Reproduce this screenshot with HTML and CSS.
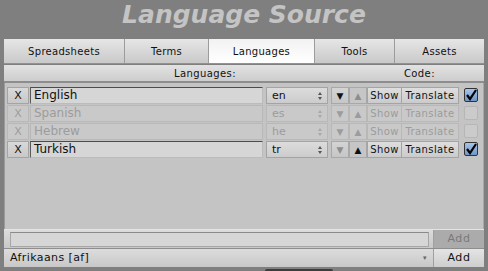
FILE: index.html
```html
<!DOCTYPE html>
<html lang="en">
<head>
  <meta charset="UTF-8">
  <title>Language Source</title>
  <link rel="stylesheet" href="styles.css">
</head>
<body>
  <h1 class="title">Language Source</h1>

  <div class="tabs">
    <div class="tab tab-sheets">Spreadsheets</div>
    <div class="tab tab-terms">Terms</div>
    <div class="tab tab-langs active">Languages</div>
    <div class="tab tab-tools">Tools</div>
    <div class="tab tab-assets">Assets</div>
  </div>

  <div class="colhead">
    <span class="col-lang">Languages:</span>
    <span class="col-code">Code:</span>
  </div>

  <div class="list">
    <div class="row">
      <div class="btn-x">X</div>
      <div class="name">English</div>
      <div class="code">en<span class="updown"></span></div>
      <div class="arrow">&#9660;</div>
      <div class="arrow off">&#9650;</div>
      <div class="btn show">Show</div>
      <div class="btn translate">Translate</div>
      <div class="check on"><svg width="14" height="14" viewBox="0 0 14 14"><path d="M3 7 L6 11 L12 2" fill="none" stroke="#000" stroke-width="2.2"/></svg></div>
    </div>
    <div class="row disabled">
      <div class="btn-x">X</div>
      <div class="name">Spanish</div>
      <div class="code">es<span class="updown"></span></div>
      <div class="arrow off">&#9660;</div>
      <div class="arrow off">&#9650;</div>
      <div class="btn show">Show</div>
      <div class="btn translate">Translate</div>
      <div class="check"></div>
    </div>
    <div class="row disabled">
      <div class="btn-x">X</div>
      <div class="name">Hebrew</div>
      <div class="code">he<span class="updown"></span></div>
      <div class="arrow off">&#9660;</div>
      <div class="arrow off">&#9650;</div>
      <div class="btn show">Show</div>
      <div class="btn translate">Translate</div>
      <div class="check"></div>
    </div>
    <div class="row">
      <div class="btn-x">X</div>
      <div class="name">Turkish</div>
      <div class="code">tr<span class="updown"></span></div>
      <div class="arrow off">&#9660;</div>
      <div class="arrow">&#9650;</div>
      <div class="btn show">Show</div>
      <div class="btn translate">Translate</div>
      <div class="check on"><svg width="14" height="14" viewBox="0 0 14 14"><path d="M3 7 L6 11 L12 2" fill="none" stroke="#000" stroke-width="2.2"/></svg></div>
    </div>
  </div>

  <div class="addrow">
    <div class="newlang"></div>
    <div class="add off">Add</div>
  </div>
  <div class="addrow pick">
    <div class="picker">Afrikaans [af]<span class="drop">&#9662;</span></div>
    <div class="add">Add</div>
  </div>
  <div class="scroll"></div>
</body>
</html>
```

FILE: styles.css
```css
body {
  margin: 0;
  width: 488px;
  height: 271px;
  overflow: hidden;
  background: #7f7f7f;
  font-family: 'DejaVu Sans', Verdana, sans-serif;
  font-size: 10px;
  color: #111;
}

.title {
  margin: 0;
  height: 39px;
  line-height: 30px;
  text-align: center;
  font-size: 25px;
  font-weight: bold;
  font-style: italic;
  color: #c4c4c4;
}

.tabs {
  display: flex;
  margin: 0 4px;
  height: 24px;
  border-bottom: 1px solid #929292;
}

.tab {
  display: flex;
  align-items: center;
  justify-content: center;
  box-sizing: border-box;
  background: linear-gradient(#e6e6e6, #c9c9c9);
  border-right: 1px solid #9c9c9c;
  letter-spacing: 0.3px;
}

.tab.active {
  background: linear-gradient(#f2f2f2, #ffffff);
}

.tab-sheets { width: 121px; }
.tab-terms { width: 84px; }
.tab-langs { width: 106px; }
.tab-tools { width: 80px; }
.tab-assets { width: 89px; border-right: none; }

.colhead {
  display: flex;
  margin: 1px 4px 0;
  height: 16px;
  align-items: center;
  background: linear-gradient(#e2e2e2, #cdcdcd);
  border-bottom: 2px solid #8d8d8d;
  letter-spacing: 0.4px;
}

.col-lang {
  margin-left: 170px;
}

.col-code {
  margin-left: 168px;
}

.list {
  margin: 0 4px;
  height: 143px;
  padding: 3px 0 0 2px;
  background: #c4c4c4;
  border-left: 1px solid #9a9a9a;
  border-right: 1px solid #a8a8a8;
}

.row {
  display: flex;
  align-items: center;
  height: 18px;
  font-size: 11px;
}

.btn-x {
  width: 22px;
  height: 17px;
  box-sizing: border-box;
  line-height: 16px;
  text-align: center;
  background: linear-gradient(#d9d9d9, #c8c8c8);
  border: 1px solid #a4a4a4;
}

.name {
  width: 233px;
  height: 17px;
  box-sizing: border-box;
  margin-left: 1px;
  padding-left: 3px;
  line-height: 15px;
  font-size: 12px;
  background: #d6d6d6;
  border: 1px solid #bcbcbc;
  border-top-color: #4c4c4c;
  border-left-color: #5a5a5a;
}

.code {
  position: relative;
  width: 62px;
  height: 17px;
  box-sizing: border-box;
  margin-left: 3px;
  padding-left: 5px;
  line-height: 15px;
  background: linear-gradient(#dcdcdc, #cccccc);
  border: 1px solid #a4a4a4;
}

.updown {
  position: absolute;
  right: 5px;
  top: 4px;
  width: 0;
  height: 0;
  border-left: 2px solid transparent;
  border-right: 2px solid transparent;
  border-bottom: 3px solid #555;
}

.updown::after {
  content: '';
  position: absolute;
  left: -2px;
  top: 5px;
  border-left: 2px solid transparent;
  border-right: 2px solid transparent;
  border-top: 3px solid #555;
}

.arrow {
  width: 18px;
  height: 17px;
  box-sizing: border-box;
  margin-left: 3px;
  line-height: 16px;
  text-align: center;
  font-size: 9px;
  background: linear-gradient(#d4d4d4, #c6c6c6);
  border: 1px solid #a8a8a8;
}

.arrow + .arrow {
  margin-left: 0;
  background: #c6c6c6;
}

.arrow.off {
  color: #8e8e8e;
}

.btn {
  height: 17px;
  box-sizing: border-box;
  line-height: 15px;
  text-align: center;
  font-size: 10px;
  background: linear-gradient(#dedede, #cbcbcb);
  border: 1px solid #a4a4a4;
  letter-spacing: 0.4px;
}

.show { width: 35px; }
.translate { width: 58px; margin-left: -1px; }

.check {
  width: 14px;
  height: 14px;
  box-sizing: border-box;
  margin-left: 5px;
  border: 1px solid #b6b6b6;
  border-radius: 2px;
  background: #cbcbcb;
}

.check.on {
  border-color: #333;
  background: linear-gradient(#a8c4e8, #6e96cc);
}

.check svg {
  display: block;
  margin: -1px 0 0 -1px;
}

.row.disabled {
  color: #9c9c9c;
}

.row.disabled .btn-x,
.row.disabled .name,
.row.disabled .code,
.row.disabled .arrow,
.row.disabled .btn {
  background: #c9c9c9;
  border-color: #b8b8b8;
}

.row.disabled .arrow {
  color: #9c9c9c;
}

.row.disabled .updown {
  border-bottom-color: #a8a8a8;
}

.row.disabled .updown::after {
  border-top-color: #a8a8a8;
}

.addrow {
  display: flex;
  margin: 0 4px;
  height: 18px;
  background: linear-gradient(#dcdcdc, #c8c8c8);
  border-top: 1px solid #e4e4e4;
}

.newlang {
  width: 417px;
  height: 13px;
  margin: 2px 0 0 6px;
  background: #d6d6d6;
  border: 1px solid #a6a6a6;
  border-top-color: #8a8a8a;
}

.add {
  width: 50px;
  margin-left: auto;
  line-height: 18px;
  text-align: center;
  letter-spacing: 0.6px;
  font-size: 11px;
  background: linear-gradient(#e4e4e4, #cecece);
  border-left: 1px solid #a0a0a0;
}

.add.off {
  color: #7a7a7a;
  background: #ababab;
}

.pick {
  border-top: 1px solid #8e8e8e;
}

.picker {
  position: relative;
  flex: 1;
  padding-left: 6px;
  line-height: 18px;
  font-size: 11px;
  letter-spacing: 0.4px;
}

.drop {
  position: absolute;
  right: 6px;
  top: 0;
  font-size: 7px;
  color: #666;
}

.scroll {
  width: 68px;
  height: 4px;
  margin: 2px 0 0 265px;
  background: #3c3c3c;
  border-radius: 2px 2px 0 0;
}
```
